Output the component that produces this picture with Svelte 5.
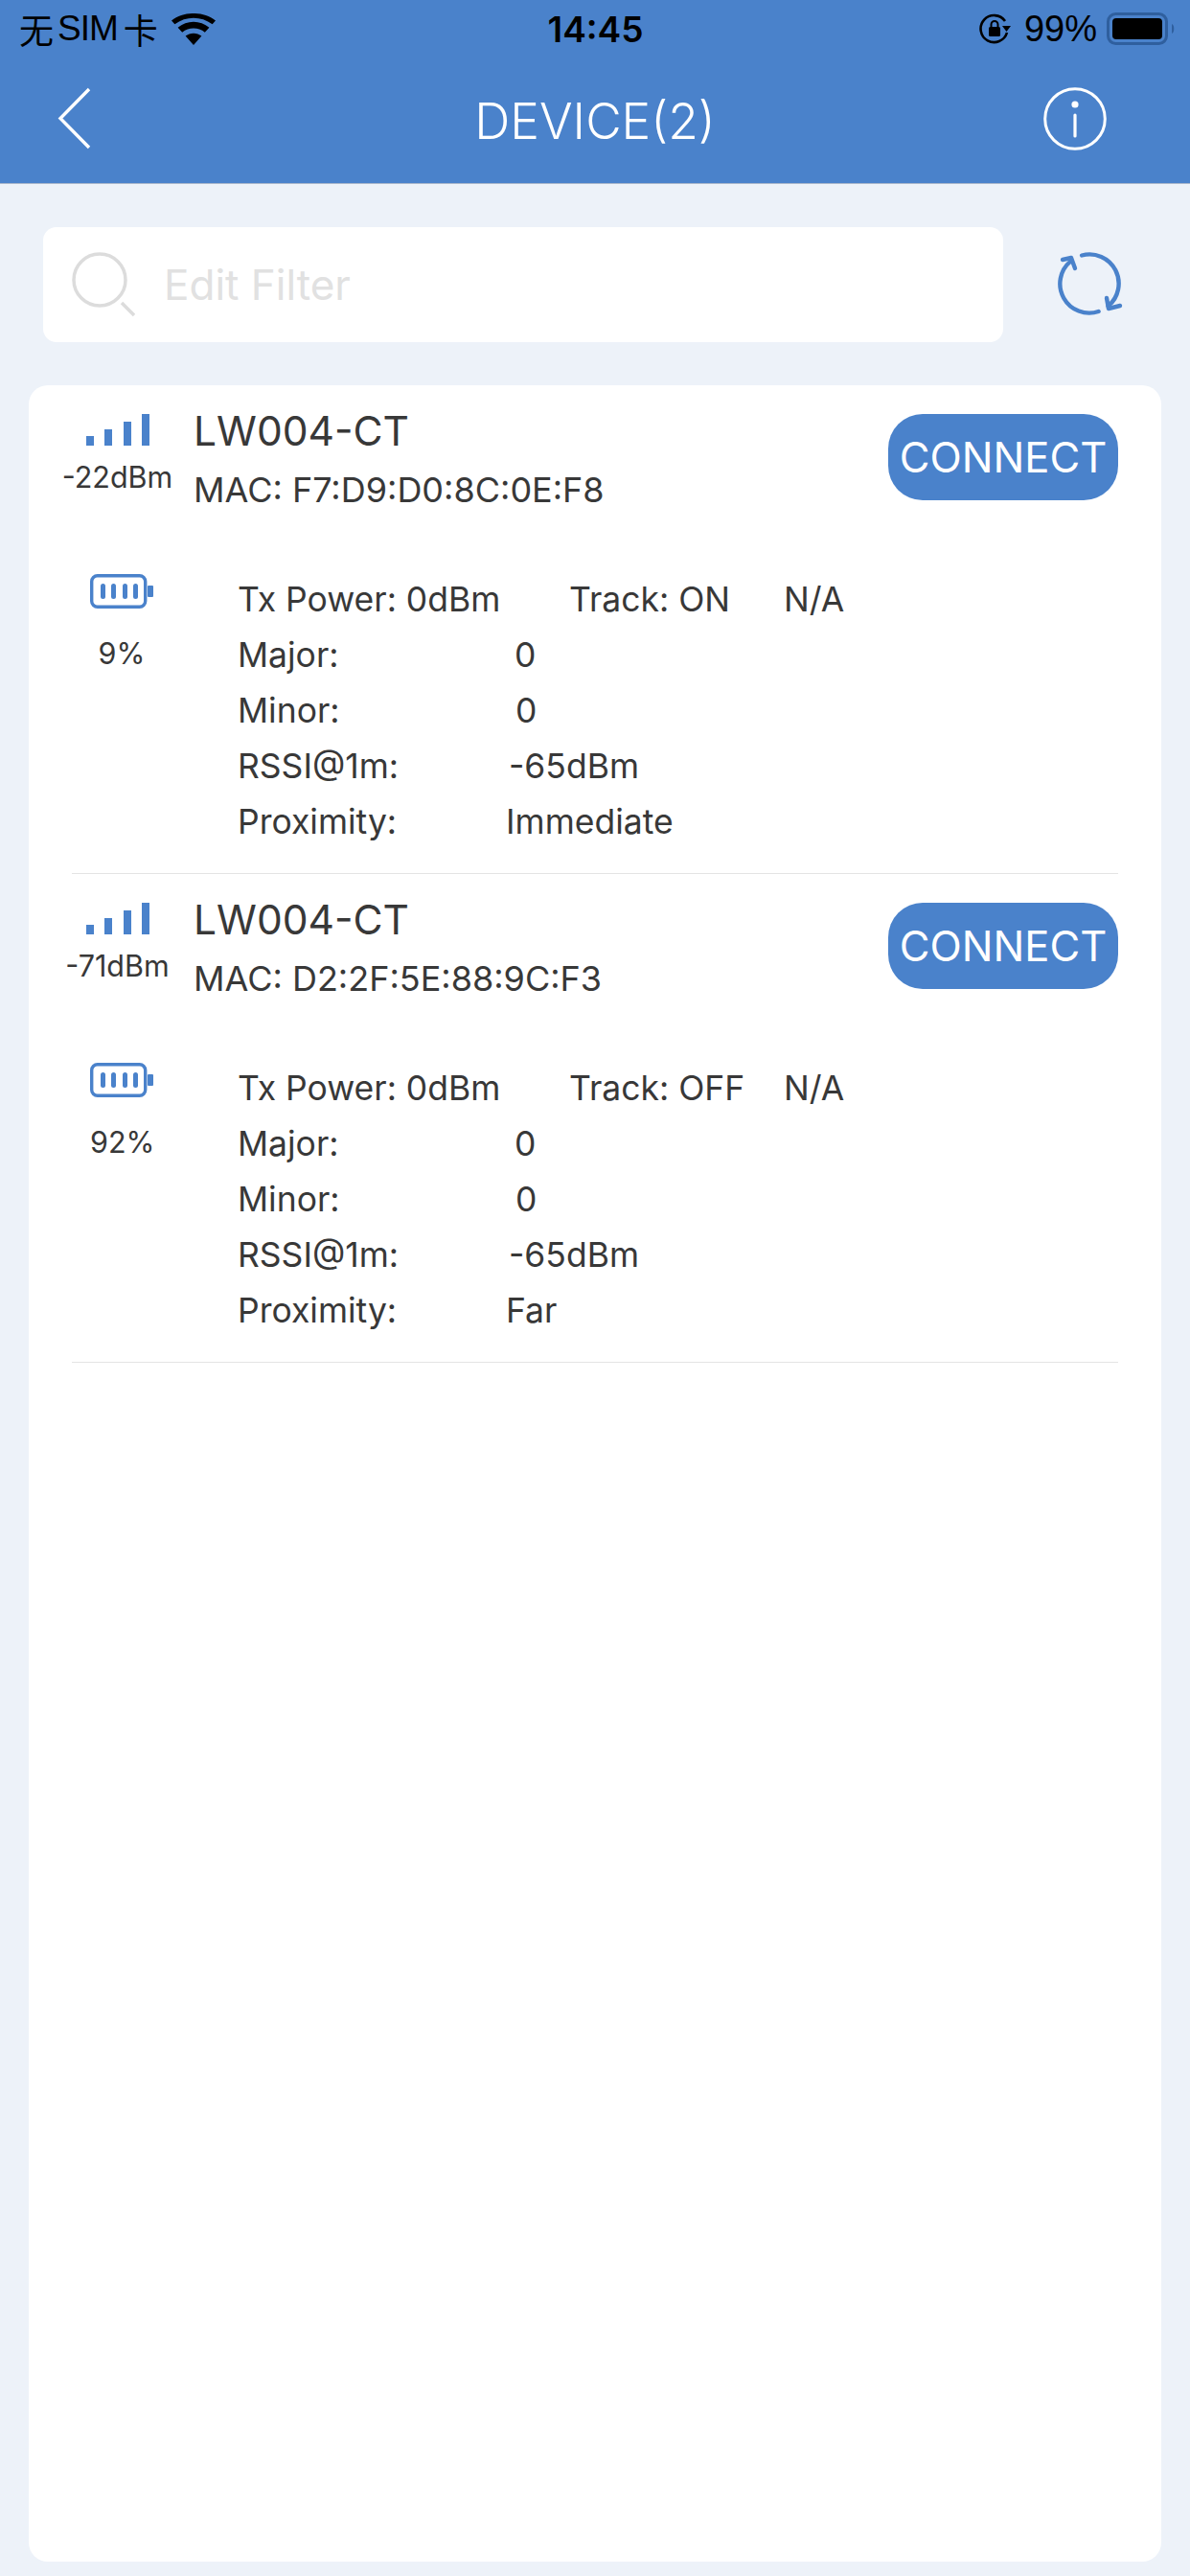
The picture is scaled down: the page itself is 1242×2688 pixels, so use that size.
<script>
  const devices = [
    { rssi: '-22dBm', mac: 'F7:D9:D0:8C:0E:F8', battery: '9%', track: 'ON', proximity: 'Immediate' },
    { rssi: '-71dBm', mac: 'D2:2F:5E:88:9C:F3', battery: '92%', track: 'OFF', proximity: 'Far' }
  ];
</script>

<div class="page">
  <header class="header">
    <div class="status">
      <div class="st-left">
        <span class="carrier">无<span class="sim">SIM</span>卡</span>
        <svg class="wifi" viewBox="0 0 46 33" width="46" height="33">
          <path d="M23 33 L14.6 23.6 C19.3 19.7 26.7 19.7 31.4 23.6 Z M11.2 19.8 L6.6 14.7 C16 6.6 30 6.6 39.4 14.7 L34.8 19.8 C27.8 14.2 18.2 14.2 11.2 19.8 Z M3.4 11.2 L0 7.4 C13 -2.5 33 -2.5 46 7.4 L42.6 11.2 C30.8 2.6 15.2 2.6 3.4 11.2 Z" fill="#000"/>
        </svg>
      </div>
      <span class="time">14:45</span>
      <div class="st-right">
        <svg class="lock" viewBox="0 0 34 34" width="34" height="34">
          <path d="M28 9 A14 14 0 1 0 30 21" fill="none" stroke="#000" stroke-width="2.6"/>
          <path d="M25 14 L34 14 L29.5 20 Z" fill="#000"/>
          <rect x="11" y="15" width="12" height="10" rx="1.5" fill="#000"/>
          <path d="M13.5 15 V12.5 A3.5 3.5 0 0 1 20.5 12.5 V15" fill="none" stroke="#000" stroke-width="2"/>
        </svg>
        <span class="pct">99%</span>
        <svg class="batt" viewBox="0 0 72 34" width="72" height="34">
          <rect x="1.5" y="1.5" width="61" height="31" rx="8" fill="none" stroke="#2f5f9e" stroke-width="3"/>
          <rect x="6" y="6" width="52" height="22" rx="4" fill="#000"/>
          <path d="M68 12 C71 13 71 21 68 22 Z" fill="#2f5f9e"/>
        </svg>
      </div>
    </div>
    <div class="nav">
      <svg class="back" viewBox="0 0 35 65" width="35" height="65">
        <path d="M33 2 L3 32.5 L33 63" fill="none" stroke="#fff" stroke-width="3.4"/>
      </svg>
      <h1 class="title">DEVICE(2)</h1>
      <svg class="info" viewBox="0 0 66 66" width="66" height="66">
        <circle cx="33" cy="33" r="31.3" fill="none" stroke="#fff" stroke-width="3"/>
        <circle cx="33" cy="18" r="3.6" fill="#fff"/>
        <path d="M33 29 V51" stroke="#fff" stroke-width="3.2" stroke-linecap="round"/>
      </svg>
    </div>
  </header>

  <div class="searchrow">
    <div class="search">
      <svg viewBox="0 0 66 68" width="66" height="68">
        <circle cx="29" cy="29" r="27" fill="none" stroke="#dcdcdc" stroke-width="3.5"/>
        <path d="M52 53 L65 66" stroke="#dcdcdc" stroke-width="3.5"/>
      </svg>
      <span class="placeholder">Edit Filter</span>
    </div>
    <svg class="refresh" viewBox="0 0 68 68" width="68" height="68">
      <g fill="none" stroke="#4a82cb" stroke-width="4.4" stroke-linecap="round" stroke-linejoin="round">
        <path d="M42.6 62 A30.5 30.5 0 0 1 13.4 9.6"/>
        <path d="M5 8 L14 6 L18 17"/>
        <path d="M25.1 3.5 A30.5 30.5 0 0 1 52.6 56.4"/>
        <path d="M65 56 L53 59 L51 48"/>
      </g>
    </svg>
  </div>

  <main class="card">
    {#each devices as d}
      <section class="device">
        <div class="top">
          <div class="signal">
            <svg viewBox="0 0 66 33" width="66" height="33">
              <rect x="0" y="23" width="8" height="10" fill="#4a82cb"/>
              <rect x="19" y="16" width="8" height="17" fill="#4a82cb"/>
              <rect x="39" y="8" width="8" height="25" fill="#4a82cb"/>
              <rect x="58" y="0" width="8" height="33" fill="#4a82cb"/>
            </svg>
            <span class="rssi">{d.rssi}</span>
          </div>
          <div class="names">
            <div class="name">LW004-CT</div>
            <div class="mac">MAC: {d.mac}</div>
          </div>
          <button class="connect">CONNECT</button>
        </div>
        <div class="bottom">
          <div class="batcol">
            <svg viewBox="0 0 66 36" width="66" height="36">
              <rect x="1.7" y="1.7" width="56" height="32.6" rx="6" fill="none" stroke="#4a82cb" stroke-width="3.4"/>
              <rect x="60" y="12" width="6" height="12" rx="1" fill="#4a82cb"/>
              <rect x="11" y="10" width="5" height="16" rx="2.5" fill="#4a82cb"/>
              <rect x="22" y="10" width="5" height="16" rx="2.5" fill="#4a82cb"/>
              <rect x="34" y="10" width="5" height="16" rx="2.5" fill="#4a82cb"/>
              <rect x="45" y="10" width="5" height="16" rx="2.5" fill="#4a82cb"/>
            </svg>
            <span class="batpct">{d.battery}</span>
          </div>
          <div class="details">
            <div class="line first">
              <span class="tx">Tx Power: 0dBm</span>
              <span class="track">Track: {d.track}</span>
              <span>N/A</span>
            </div>
            <div class="line"><span class="label">Major:</span><span class="zero">0</span></div>
            <div class="line"><span class="label">Minor:</span><span class="zero minor">0</span></div>
            <div class="line"><span class="label">RSSI@1m:</span><span class="dbm">-65dBm</span></div>
            <div class="line"><span class="label">Proximity:</span><span class="prox">{d.proximity}</span></div>
          </div>
        </div>
      </section>
      <div class="divider"></div>
    {/each}
  </main>
</div>

<style>
  :global(body) {
    margin: 0;
    background: #edf2f9;
  }
  .page {
    width: 1242px;
    height: 2688px;
    display: flex;
    flex-direction: column;
    background: #edf2f9;
    font-family: Inter, "Noto Sans CJK SC", sans-serif;
    color: #383838;
    overflow: hidden;
  }
  .header {
    height: 192px;
    background: #4a82cb;
    border-bottom: 1px solid #a9b7cc;
    box-sizing: border-box;
    display: flex;
    flex-direction: column;
  }
  .status {
    height: 60px;
    padding: 0 15px 0 20px;
    display: flex;
    align-items: center;
    justify-content: space-between;
    color: #000;
  }
  .st-left, .st-right {
    width: 300px;
    display: flex;
    align-items: center;
  }
  .st-right { justify-content: flex-end; }
  .carrier {
    font-size: 36px;
    font-family: "Liberation Sans", "Noto Sans CJK SC", sans-serif;
    white-space: nowrap;
    display: flex;
    align-items: center;
  }
  .sim {
    margin: 0 6px 0 4px;
    letter-spacing: -1px;
    font-size: 37px;
  }
  .wifi { margin-left: 14px; }
  .time {
    font-size: 37px;
    font-weight: 600;
    margin-left: -4px;
  }
  .pct {
    font-size: 38px;
    margin: 0 10px 0 14px;
    font-family: "Liberation Sans", sans-serif;
  }
  .nav {
    flex: 1;
    padding: 0 60px 2px;
    margin-top: -2px;
    display: grid;
    grid-template-columns: 1fr auto 1fr;
    align-items: center;
  }
  .info {
    justify-self: end;
    margin-right: 27px;
  }
  .title {
    margin: 4px 0 0;
    font-size: 51.5px;
    font-weight: 300;
    color: #fff;
  }
  .searchrow {
    display: flex;
    align-items: center;
    padding: 45px 70px 0 45px;
    justify-content: space-between;
  }
  .search {
    width: 1002px;
    height: 120px;
    background: #fff;
    border-radius: 14px;
    display: flex;
    align-items: center;
    padding-left: 30px;
    box-sizing: border-box;
    gap: 30px;
  }
  .placeholder {
    font-size: 44px;
    color: #e1e1e1;
    line-height: 1;
  }
  .card {
    margin: 45px 30px 0;
    height: 2271px;
    background: #fff;
    border-radius: 20px;
    display: flex;
    flex-direction: column;
  }
  .device {
    height: 509px;
    box-sizing: border-box;
    padding: 30px 45px 0 36px;
  }
  .top {
    display: flex;
    align-items: flex-start;
  }
  .signal {
    width: 113px;
    display: flex;
    flex-direction: column;
    align-items: center;
    gap: 16px;
  }
  .rssi {
    font-size: 30.5px;
    line-height: 34px;
    white-space: nowrap;
  }
  .names {
    flex: 1;
    margin-left: 23px;
  }
  .name {
    font-size: 42.5px;
    line-height: 34px;
    margin-top: 1px;
  }
  .mac {
    margin-top: 24px;
    font-size: 36px;
    line-height: 40px;
  }
  .connect {
    width: 240px;
    height: 90px;
    background: #4a82cb;
    color: #fff;
    border: none;
    border-radius: 36px;
    font-family: inherit;
    font-size: 43.5px;
    padding: 0;
  }
  .bottom {
    display: flex;
    margin-top: 68px;
  }
  .batcol {
    width: 122px;
    display: flex;
    flex-direction: column;
    align-items: flex-start;
    padding-left: 28px;
    box-sizing: border-box;
  }
  .batpct {
    width: 66px;
    text-align: center;
    font-size: 30.5px;
    margin-top: 28px;
  }
  .details {
    margin-left: 60px;
    font-size: 35.5px;
  }
  .line {
    height: 58px;
    line-height: 58px;
    display: flex;
    white-space: nowrap;
  }
  .line.first { margin-top: -2px; }
  .tx { width: 346px; }
  .track { width: 224px; }
  .label { width: 280px; }
  .zero { margin-left: 9px; }
  .minor { margin-left: 10px; }
  .dbm { margin-left: 3px; }
  .prox { margin-left: 0; }
  .divider {
    height: 1px;
    margin: 0 45px;
    background: #e4e4e4;
    flex-shrink: 0;
  }
</style>
